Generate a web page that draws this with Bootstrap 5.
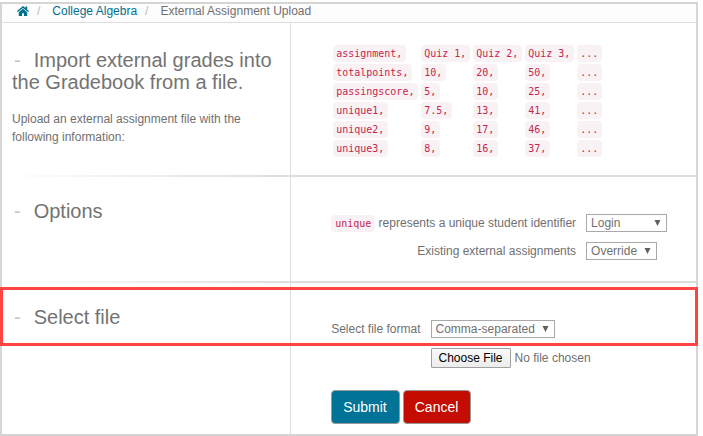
<!DOCTYPE html>
<html lang="en">
<head>
<meta charset="utf-8">
<meta name="viewport" content="width=device-width, initial-scale=1">
<title>External Assignment Upload</title>
<link href="https://cdn.jsdelivr.net/npm/bootstrap@5.3.0/dist/css/bootstrap.min.css" rel="stylesheet">
<style>
  body { font-family: "Liberation Sans", Arial, sans-serif; font-size: 12px; line-height: 18px; color: #707070; background: #fff; }
  .page-frame { margin: 2px 5px 0 0; border: 2px solid #d5d5d5; }
  .crumbs { --bs-breadcrumb-divider-color: #bbb; --bs-breadcrumb-item-active-color: #707070; height: 19px; padding-left: 15px; background: #fdfdfd; border-bottom: 1px solid #ddd; line-height: 14px; --bs-breadcrumb-font-size: 12px; }
  .crumbs .breadcrumb-item + .breadcrumb-item { padding-left: 8px; }
  .crumbs .breadcrumb-item + .breadcrumb-item::before { padding-right: 12px; }
  .crumbs a { color: #00708f; }
  .crumbs svg { display: block; margin-top: 2px; }
  .rule-below::after { content: ""; display: block; height: 2px; background: linear-gradient(to right, #fff, #ddd 290px); }
  .side { border-right: 1px solid #ddd; padding: 26px 10px 28px; }
  .side h2 { font-size: 20px; line-height: 22px; font-weight: 400; margin-bottom: 17px; color: #737373; }
  .side h2 span { color: #c4c4c4; margin-right: 13px; padding-left: 2px; }
  .side.lower { padding-top: 23px; }
  .main-pane { padding-left: 40px; }
  .main-pane.samples { padding-top: 20px; padding-bottom: 16px; }
  .main-pane.options { padding-top: 37px; padding-bottom: 21px; }
  .main-pane.chooser { padding-top: 37px; padding-bottom: 10px; }
  code { font-family: "DejaVu Sans Mono", monospace; font-size: 10px; line-height: 13px; color: #c7254e; background: #f9f2f4; border-radius: 4px; padding: 2px 4px; display: inline-block; white-space: nowrap; }
  .sample-grid { border-collapse: separate; border-spacing: 0 2px; margin-left: 2px; }
  .sample-grid td { padding: 0; height: 17px; line-height: 0; min-width: 52px; }
  .sample-grid td:first-child { min-width: 88px; }
  .sample-grid code { padding: 2px 4px 2px 3px; }
  .fields { display: grid; grid-template-columns: max-content max-content; column-gap: 10px; row-gap: 10px; align-items: center; justify-items: start; }
  .options .fields label { justify-self: end; }
  .fields select { appearance: none; height: 18px; line-height: 16px; padding: 0 18px 0 4px; font-size: 12px; color: #707070; border: 1px solid #a9a9a9; border-radius: 0;
    background: #fff url("data:image/svg+xml,%3Csvg xmlns='http://www.w3.org/2000/svg' viewBox='0 0 7 6'%3E%3Cpath fill='%23606060' d='M.5 0h6L3.5 6z'/%3E%3C/svg%3E") no-repeat right 5px center / 7px 6px; }
  #identifier { width: 81px; }
  #existing { width: 71px; }
  #format { width: 124px; }
  .fields input[type=file] { grid-column: 2; font-size: 12px; line-height: 18px; height: 20px; width: 200px; }
  .fields input[type=file]::file-selector-button { height: 20px; width: 80px; padding: 0; margin: 0 4px 0 0; border: 1px solid #a0a0a0; border-radius: 1px; background: linear-gradient(#fafafa, #ececec); color: #000; font-size: 12px; line-height: 18px; }
  .actions { margin-top: 22px; gap: 3px; }
  .actions .btn { font-size: 14px; line-height: 20px; padding: 6px 12px 6px 11px; border: 1px solid #999; border-radius: 4px; color: #fff; }
  .btn-send { background: #007396; }
  .btn-stop { background: #c40d00; }
  .outline-box { position: absolute; top: 4px; left: -2px; right: -2px; height: 59px; border: 3px solid #ff4444; pointer-events: none; }
</style>
</head>
<body>
<main class="page-frame">
  <nav aria-label="breadcrumb">
    <ol class="breadcrumb crumbs mb-0">
      <li class="breadcrumb-item"><a href="#" aria-label="Home"><svg width="12" height="10" viewBox="0 0 12 10" fill="currentColor"><path d="M6 0 0 5l.9 1.1L6 1.9l5.1 4.2L12 5l-1.8-1.5V.5H8.4V2z"/><path d="M6 2.8 1.8 6.3V10H5V7.2h2V10h3.2V6.3z"/></svg></a></li>
      <li class="breadcrumb-item"><a href="#" class="text-decoration-none">College Algebra</a></li>
      <li class="breadcrumb-item active" aria-current="page">External Assignment Upload</li>
    </ol>
  </nav>

  <section class="rule-below">
    <div class="row g-0">
      <div class="col-5 side">
        <h2><span>-</span>Import external grades into the Gradebook from a file.</h2>
        <p class="mb-0">Upload an external assignment file with the following information:</p>
      </div>
      <div class="col-7 main-pane samples">
        <table class="sample-grid">
          <tbody>
            <tr><td><code>assignment,</code></td><td><code>Quiz 1,</code></td><td><code>Quiz 2,</code></td><td><code>Quiz 3,</code></td><td><code>...</code></td></tr>
            <tr><td><code>totalpoints,</code></td><td><code>10,</code></td><td><code>20,</code></td><td><code>50,</code></td><td><code>...</code></td></tr>
            <tr><td><code>passingscore,</code></td><td><code>5,</code></td><td><code>10,</code></td><td><code>25,</code></td><td><code>...</code></td></tr>
            <tr><td><code>unique1,</code></td><td><code>7.5,</code></td><td><code>13,</code></td><td><code>41,</code></td><td><code>...</code></td></tr>
            <tr><td><code>unique2,</code></td><td><code>9,</code></td><td><code>17,</code></td><td><code>46,</code></td><td><code>...</code></td></tr>
            <tr><td><code>unique3,</code></td><td><code>8,</code></td><td><code>16,</code></td><td><code>37,</code></td><td><code>...</code></td></tr>
          </tbody>
        </table>
      </div>
    </div>
  </section>

  <form>
    <section class="rule-below">
      <div class="row g-0">
        <div class="col-5 side lower">
          <h2><span>-</span>Options</h2>
        </div>
        <div class="col-7 main-pane options">
          <div class="fields">
            <label for="identifier"><code>unique</code> represents a unique student identifier</label>
            <select id="identifier"><option>Login</option></select>
            <label for="existing">Existing external assignments</label>
            <select id="existing"><option>Override</option></select>
          </div>
        </div>
      </div>
    </section>

    <section class="position-relative">
      <div class="row g-0">
        <div class="col-5 side lower">
          <h2><span>-</span>Select file</h2>
        </div>
        <div class="col-7 main-pane chooser">
          <div class="fields">
            <label for="format">Select file format</label>
            <select id="format"><option>Comma-separated</option></select>
            <input type="file" aria-label="File to upload">
          </div>
          <div class="actions d-flex">
            <button type="submit" class="btn btn-send">Submit</button>
            <button type="button" class="btn btn-stop">Cancel</button>
          </div>
        </div>
      </div>
      <div class="outline-box"></div>
    </section>
  </form>
</main>
<script src="https://cdn.jsdelivr.net/npm/bootstrap@5.3.0/dist/js/bootstrap.bundle.min.js"></script>
</body>
</html>
